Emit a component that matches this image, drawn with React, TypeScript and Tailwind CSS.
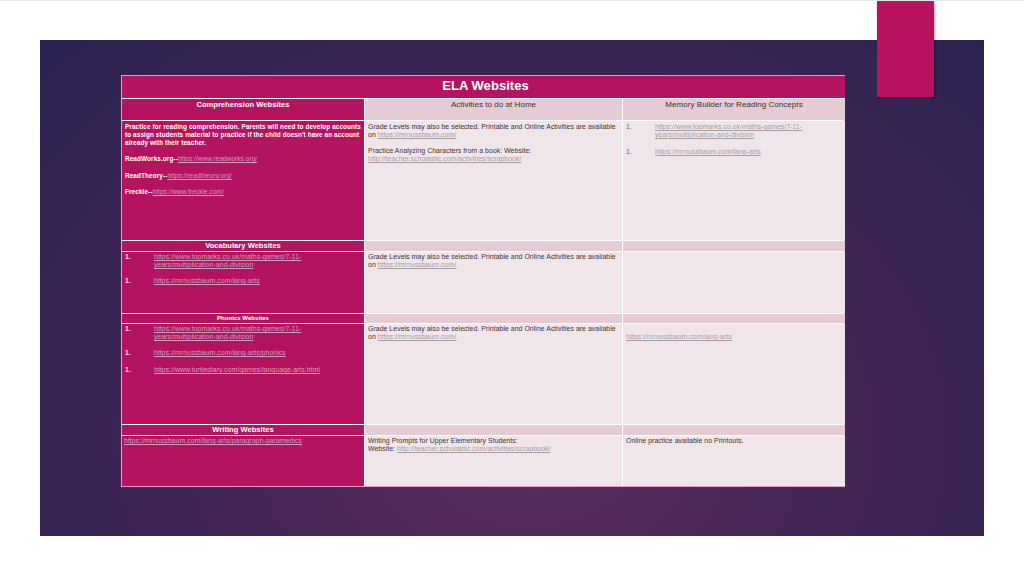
import React from "react";

const font = { fontFamily: '"Liberation Sans", Arial, sans-serif' };

const DarkLink = ({ children }: { children: React.ReactNode }) => (
  <span className="text-[#cfa0c2] underline font-normal">{children}</span>
);
const LightLink = ({ children }: { children: React.ReactNode }) => (
  <span className="text-[#a99ba3] underline">{children}</span>
);

const ListItem = ({ children, light }: { children: React.ReactNode; light?: boolean }) => (
  <div className="flex">
    <span className={`w-[29px] shrink-0 ${light ? "text-[#6b5e66]" : "text-[#f5d9ea] font-bold"}`}>1.</span>
    <div>{children}</div>
  </div>
);

const GradeLevels = () => (
  <>
    <div>Grade Levels may also be selected. Printable and Online Activities are available</div>
    <div>
      on <LightLink>https://mrnussbaum.com/</LightLink>
    </div>
  </>
);

const magenta = "bg-[#b4135f]";
const rowHead = "bg-[#e5cbd3]";
const cell = "bg-[#f0e6ea]";

export default function App() {
  return (
    <div
      style={font}
      className="relative w-[1024px] h-[576px] bg-white overflow-hidden border-t border-[#e6e6e6]"
    >
      <div className="absolute left-[877px] top-0 w-[57px] h-[96px] bg-[#b8135f] shadow-[1px_1px_3px_rgba(0,0,0,0.35)] z-10" />
      <div className="pt-[39px] pl-[40px]">
        <div className="w-[944px] h-[496px] pt-[35px] pl-[81px] bg-[radial-gradient(ellipse_at_52%_80%,#5c2c5d_0%,#472757_35%,#2c2350_100%)]">
          <div className="w-[724px] border border-[#e79ac6] bg-white grid grid-cols-[242px_257px_222px] grid-rows-[22px_21px_119px_10px_61px_9px_100px_10px_50px] gap-px leading-[8px] tracking-[0.05px]">
            <div className={`col-span-3 ${magenta} text-white font-bold text-[13px] leading-[20px] text-center pl-[4px]`}>
              ELA Websites
            </div>

            <div className={`${magenta} text-white font-bold text-[7.5px] text-center pt-[2px]`}>Comprehension Websites</div>
            <div className={`${rowHead} text-[#3b2f36] text-[8px] text-center pt-[2px]`}>Activities to do at Home</div>
            <div className={`${rowHead} text-[#3b2f36] text-[8px] text-center pt-[2px]`}>Memory Builder for Reading Concepts</div>

            <div className={`${magenta} text-white font-bold text-[6.4px] px-[3px] pt-[2px] tracking-[0.1px]`}>
              <p>
                Practice for reading comprehension. Parents will need to develop accounts to assign students material to
                practice if the child doesn't have an account already with their teacher.
              </p>
              <p className="mt-[8px]">
                ReadWorks.org--<DarkLink>https://www.readworks.org/</DarkLink>
              </p>
              <p className="mt-[9px]">
                ReadTheory--<DarkLink>https://readtheory.org/</DarkLink>
              </p>
              <p className="mt-[8px]">
                Freckle--<DarkLink>https://www.freckle.com/</DarkLink>
              </p>
            </div>
            <div className={`${cell} text-[#3b2f36] text-[6.9px] px-[3px] pt-[2px]`}>
              <GradeLevels />
              <div className="mt-[8px]">Practice Analyzing Characters from a book: Website:</div>
              <div>
                <LightLink>http://teacher.scholastic.com/activities/scrapbook/</LightLink>
              </div>
            </div>
            <div className={`${cell} text-[6.9px] px-[3px] pt-[2px]`}>
              <ListItem light>
                <LightLink>
                  https://www.topmarks.co.uk/maths-games/7-11-
                  <br />
                  years/multiplication-and-division
                </LightLink>
              </ListItem>
              <div className="mt-[9px]">
                <ListItem light>
                  <LightLink>https://mrnussbaum.com/lang-arts</LightLink>
                </ListItem>
              </div>
            </div>

            <div className={`${magenta} text-white font-bold text-[7.5px] leading-[10px] text-center`}>Vocabulary Websites</div>
            <div className={rowHead} />
            <div className={rowHead} />

            <div className={`${magenta} text-white text-[6.9px] px-[3px] pt-[1px]`}>
              <ListItem>
                <DarkLink>
                  https://www.topmarks.co.uk/maths-games/7-11-
                  <br />
                  years/multiplication-and-division
                </DarkLink>
              </ListItem>
              <div className="mt-[8px]">
                <ListItem>
                  <DarkLink>https://mrnussbaum.com/lang-arts</DarkLink>
                </ListItem>
              </div>
            </div>
            <div className={`${cell} text-[#3b2f36] text-[6.9px] px-[3px] pt-[1px]`}>
              <GradeLevels />
            </div>
            <div className={cell} />

            <div className={`${magenta} text-white font-bold text-[6px] leading-[9px] text-center`}>Phonics Websites</div>
            <div className={rowHead} />
            <div className={rowHead} />

            <div className={`${magenta} text-white text-[6.9px] px-[3px] pt-[1px]`}>
              <ListItem>
                <DarkLink>
                  https://www.topmarks.co.uk/maths-games/7-11-
                  <br />
                  years/multiplication-and-division
                </DarkLink>
              </ListItem>
              <div className="mt-[8px]">
                <ListItem>
                  <DarkLink>https://mrnussbaum.com/lang-arts/phonics</DarkLink>
                </ListItem>
              </div>
              <div className="mt-[9px]">
                <ListItem>
                  <DarkLink>https://www.turtlediary.com/games/language-arts.html</DarkLink>
                </ListItem>
              </div>
            </div>
            <div className={`${cell} text-[#3b2f36] text-[6.9px] px-[3px] pt-[1px]`}>
              <GradeLevels />
            </div>
            <div className={`${cell} text-[6.9px] px-[3px] pt-[9px]`}>
              <LightLink>https://mrnussbaum.com/lang-arts</LightLink>
            </div>

            <div className={`${magenta} text-white font-bold text-[7.5px] leading-[10px] text-center`}>Writing Websites</div>
            <div className={rowHead} />
            <div className={rowHead} />

            <div className={`${magenta} text-[6.9px] px-[2px] pt-[1px]`}>
              <DarkLink>https://mrnussbaum.com/lang-arts/paragraph-paramedics</DarkLink>
            </div>
            <div className={`${cell} text-[#3b2f36] text-[6.9px] px-[3px] pt-[1px]`}>
              <div>Writing Prompts for Upper Elementary Students:</div>
              <div>
                Website: <LightLink>http://teacher.scholastic.com/activities/scrapbook/</LightLink>
              </div>
            </div>
            <div className={`${cell} text-[#3b2f36] text-[6.9px] px-[3px] pt-[1px]`}>
              Online practice available no Printouts.
            </div>
          </div>
        </div>
      </div>
    </div>
  );
}
